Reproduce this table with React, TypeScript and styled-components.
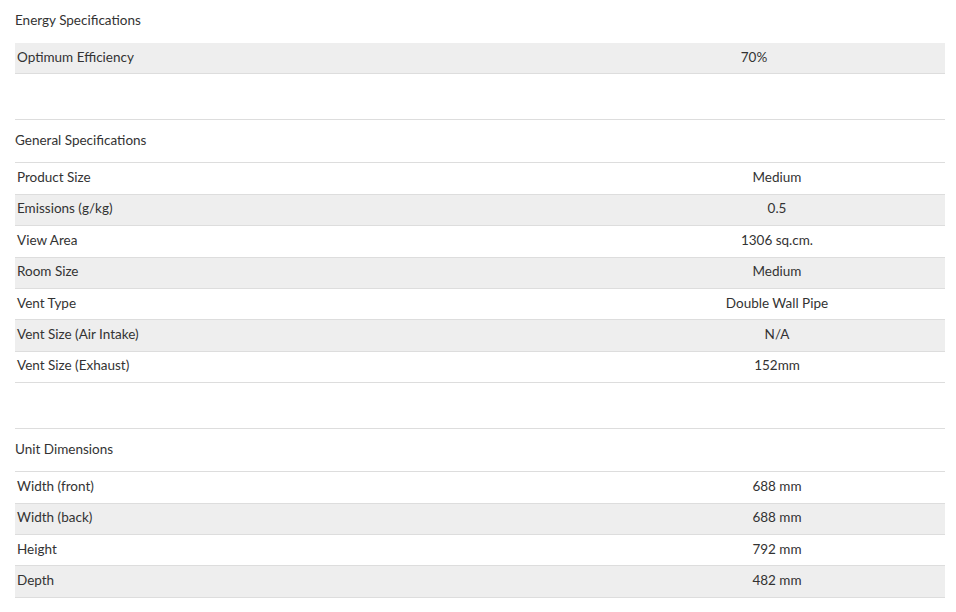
import React from "react";
import styled, { createGlobalStyle } from "styled-components";

const Global = createGlobalStyle`
  html, body { margin: 0; padding: 0; background: #fff; }
  body { font-family: Lato, "Open Sans", "Liberation Sans", sans-serif; color: #333; }
`;

const Page = styled.div`
  width: 930px;
  padding: 0 11px 0 15px;
  display: flex;
  flex-direction: column;
`;

const Section = styled.section<{ $first?: boolean }>`
  display: flex;
  flex-direction: column;
  margin-top: ${(p) => (p.$first ? "0" : "45px")};
  border-top: ${(p) => (p.$first ? "none" : "1px solid #dddddd")};
`;

const Heading = styled.div<{ $first?: boolean }>`
  display: flex;
  align-items: center;
  font-size: 13.5px;
  color: #333;
  box-sizing: border-box;
  height: 43px;
  padding-bottom: 3px;
  border-bottom: ${(p) => (p.$first ? "none" : "1px solid #dddddd")};
`;

const Row = styled.div<{ $shade: boolean; $labelWidth: number }>`
  display: grid;
  grid-template-columns: ${(p) => p.$labelWidth}px 1fr;
  align-items: center;
  height: 31.4px;
  box-sizing: border-box;
  padding-bottom: 3px;
  border-bottom: 1px solid #dddddd;
  background: ${(p) => (p.$shade ? "#eeeeee" : "#ffffff")};
  font-size: 13.5px;
`;

const Label = styled.div`
  padding-left: 2px;
`;

const Value = styled.div`
  text-align: center;
`;

type Spec = [string, string];

const sections: { title: string; rows: Spec[]; shadeFirst: boolean; labelWidth: number }[] = [
  {
    title: "Energy Specifications",
    rows: [["Optimum Efficiency", "70%"]],
    shadeFirst: true,
    labelWidth: 548,
  },
  {
    title: "General Specifications",
    shadeFirst: false,
    labelWidth: 594,
    rows: [
      ["Product Size", "Medium"],
      ["Emissions (g/kg)", "0.5"],
      ["View Area", "1306 sq.cm."],
      ["Room Size", "Medium"],
      ["Vent Type", "Double Wall Pipe"],
      ["Vent Size (Air Intake)", "N/A"],
      ["Vent Size (Exhaust)", "152mm"],
    ],
  },
  {
    title: "Unit Dimensions",
    shadeFirst: false,
    labelWidth: 594,
    rows: [
      ["Width (front)", "688 mm"],
      ["Width (back)", "688 mm"],
      ["Height", "792 mm"],
      ["Depth", "482 mm"],
    ],
  },
];

export default function App() {
  return (
    <>
      <Global />
      <Page>
        {sections.map((s, si) => (
          <Section key={s.title} $first={si === 0}>
            <Heading $first={si === 0}>{s.title}</Heading>
            {s.rows.map(([l, v], i) => (
              <Row
                key={l}
                $labelWidth={s.labelWidth}
                $shade={s.shadeFirst ? i % 2 === 0 : i % 2 === 1}
              >
                <Label>{l}</Label>
                <Value>{v}</Value>
              </Row>
            ))}
          </Section>
        ))}
      </Page>
    </>
  );
}
